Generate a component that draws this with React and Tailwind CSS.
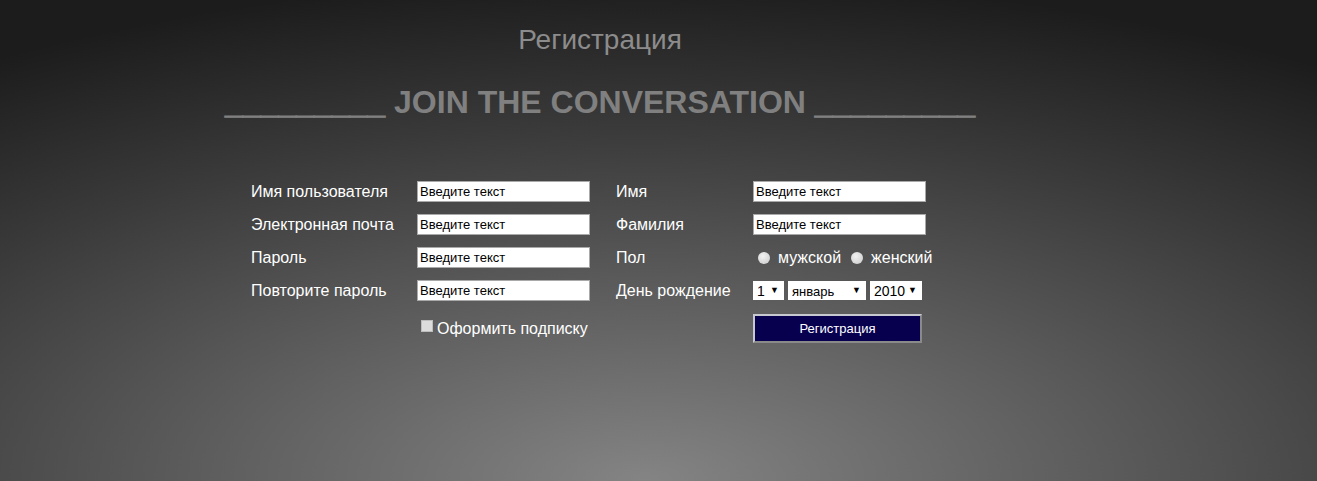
import React from "react";

const Input = () => (
  <div className="w-[173px] h-[21px] bg-white border border-[#a9a9a9] flex items-center pl-[2px] text-[13px] text-black leading-none">
    Введите текст
  </div>
);

const Label = ({ children }) => (
  <div className="text-[16px] text-white leading-none">{children}</div>
);

const Sel = ({ w, children }) => (
  <div className={`${w} h-[19px] bg-white flex items-center justify-between pl-[4px] pr-[5px] text-[14px] text-black leading-none`}>
    <span>{children}</span>
    <span className="text-[9px]">▼</span>
  </div>
);

export default function App() {
  return (
    <div
      className="w-[1317px] h-[481px] overflow-hidden bg-[radial-gradient(ellipse_90%_105%_at_49%_100%,#848484_0%,#5a5a5a_40%,#3a3a3a_70%,#1c1c1c_100%)]"
      style={{ fontFamily: '"Liberation Sans", Arial, sans-serif' }}
    >
      <div className="w-[1200px] text-center">
        <div className="pt-[26px] text-[28px] leading-[28px] text-[#8c8c8c]">Регистрация</div>
        <div className="mt-[28px] text-[32px] leading-[40px] font-bold text-[#808080]">
          <span className="[-webkit-text-stroke:1px_#808080]">_________</span> JOIN THE CONVERSATION{" "}
          <span className="[-webkit-text-stroke:1px_#808080]">_________</span>
        </div>
        <div className="mt-[53px] mx-auto w-[698px] grid grid-cols-[166px_199px_137px_196px] grid-rows-[33px_33px_33px_33px_43px] items-center text-left">
          <Label>Имя пользователя</Label>
          <Input />
          <Label>Имя</Label>
          <Input />

          <Label>Электронная почта</Label>
          <Input />
          <Label>Фамилия</Label>
          <Input />

          <Label>Пароль</Label>
          <Input />
          <Label>Пол</Label>
          <div className="flex items-center text-[16px] text-white leading-none pl-[5px]">
            <span className="w-[12px] h-[12px] rounded-full bg-[radial-gradient(circle_at_40%_35%,#f2f2f2,#c8c8c8)] mr-[8px]" />
            <span className="mr-[10px]">мужской</span>
            <span className="w-[12px] h-[12px] rounded-full bg-[radial-gradient(circle_at_40%_35%,#f2f2f2,#c8c8c8)] mr-[8px]" />
            <span>женский</span>
          </div>

          <Label>Повторите пароль</Label>
          <Input />
          <Label>День рождение</Label>
          <div className="flex items-center gap-[4px]">
            <Sel w="w-[31px]">1</Sel>
            <Sel w="w-[78px]">
              <span className="text-[13px]">январь</span>
            </Sel>
            <Sel w="w-[52px]">2010</Sel>
          </div>

          <div />
          <div className="flex items-center pl-[4px] text-[16px] text-white leading-none">
            <span className="w-[12px] h-[12px] bg-[#dcdcdc] border border-[#bdbdbd] mr-[4px] -mt-[5px]" />
            <span>Оформить подписку</span>
          </div>
          <div />
          <div className="w-[169px] h-[29px] bg-[#07004f] border-2 border-t-[#c8c8d0] border-l-[#c8c8d0] border-r-[#8a8a8a] border-b-[#8a8a8a] flex items-center justify-center text-[13px] text-white leading-none">
            Регистрация
          </div>
        </div>
      </div>
    </div>
  );
}
